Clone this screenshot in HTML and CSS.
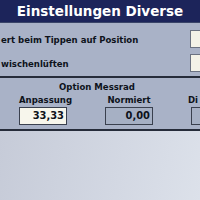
FILE: index.html
```html
<!DOCTYPE html>
<html lang="de">

<head>
    <meta charset="UTF-8">
    <meta name="viewport" content="width=device-width, initial-scale=1.0">
    <title>Einstellungen Diverse</title>
    <link rel="stylesheet" href="styles.css">
</head>

<body>
    <div class="screen">
        <div class="title">Einstellungen Diverse</div>
        <div class="panel">
            <div class="row">
                <span class="row-label">ert beim Tippen auf Position</span>
                <span class="check"></span>
            </div>
            <div class="row">
                <span class="row-label">wischenlüften</span>
                <span class="check"></span>
            </div>
            <div class="separator"></div>
            <div class="group-title">Option Messrad</div>
            <div class="fields">
                <div class="field">
                    <div class="field-label">Anpassung</div>
                    <div class="value editable">33,33</div>
                </div>
                <div class="field">
                    <div class="field-label">Normiert</div>
                    <div class="value">0,00</div>
                </div>
                <div class="field last">
                    <div class="field-label">Di</div>
                    <div class="value"></div>
                </div>
            </div>
            <div class="separator bottom"></div>
        </div>
        <div class="rest"></div>
    </div>
</body>

</html>
```

FILE: styles.css
```css
body {
    margin: 0;
    font-family: "DejaVu Sans", sans-serif;
}

.screen {
    width: 200px;
    height: 200px;
    overflow: hidden;
    display: flex;
    flex-direction: column;
    background: #cdd2de;
}

.title {
    height: 22px;
    line-height: 23px;
    background: #1c245a;
    color: #fff;
    font-weight: bold;
    font-size: 13.5px;
    text-align: center;
    border-bottom: 1px solid #394468;
}

.panel {
    background: #a9b2c7;
    padding-top: 4px;
}

.row {
    display: flex;
    align-items: center;
    height: 24px;
    padding-left: 1px;
}

.row-label {
    font-family: "DejaVu Sans Condensed", "DejaVu Sans", sans-serif;
    font-stretch: condensed;
    font-weight: bold;
    font-size: 9.5px;
    color: #0e121b;
    white-space: nowrap;
}

.check {
    width: 18px;
    height: 18px;
    margin-left: auto;
    margin-right: -8px;
    box-sizing: border-box;
    background: #f3f2e8;
    border: 1px solid #6b7282;
}

.separator {
    height: 2px;
    background: #262c3a;
    margin-top: 1px;
}

.group-title,
.field-label {
    font-family: "DejaVu Sans Condensed", "DejaVu Sans", sans-serif;
    font-stretch: condensed;
    font-weight: bold;
    font-size: 9.5px;
    color: #0e121b;
    text-align: center;
}

.group-title {
    height: 17px;
    line-height: 17px;
    margin-left: -6px;
}

.fields {
    display: flex;
    gap: 38px;
    padding-left: 19px;
}

.field {
    width: 48px;
    flex-shrink: 0;
    display: flex;
    flex-direction: column;
    gap: 2px;
}

.field.last .field-label {
    text-align: left;
    padding-left: 0;
    margin-left: -3px;
}

.field-label {
    height: 10px;
    line-height: 10px;
    white-space: nowrap;
}

.value {
    height: 18px;
    box-sizing: border-box;
    border: 1px solid #3a404e;
    background: #a6b0c4;
    font-family: "DejaVu Sans Condensed", "DejaVu Sans", sans-serif;
    font-stretch: condensed;
    font-weight: bold;
    font-size: 11px;
    line-height: 16px;
    text-align: right;
    padding-right: 2px;
    color: #0e121b;
}

.value.editable {
    background: #f7f6ec;
}

.separator.bottom {
    margin-top: 4px;
}

.rest {
    flex: 1;
    background: linear-gradient(100deg, #c6cbd8, #d3d8e3 60%, #dce1ea);
}
```
